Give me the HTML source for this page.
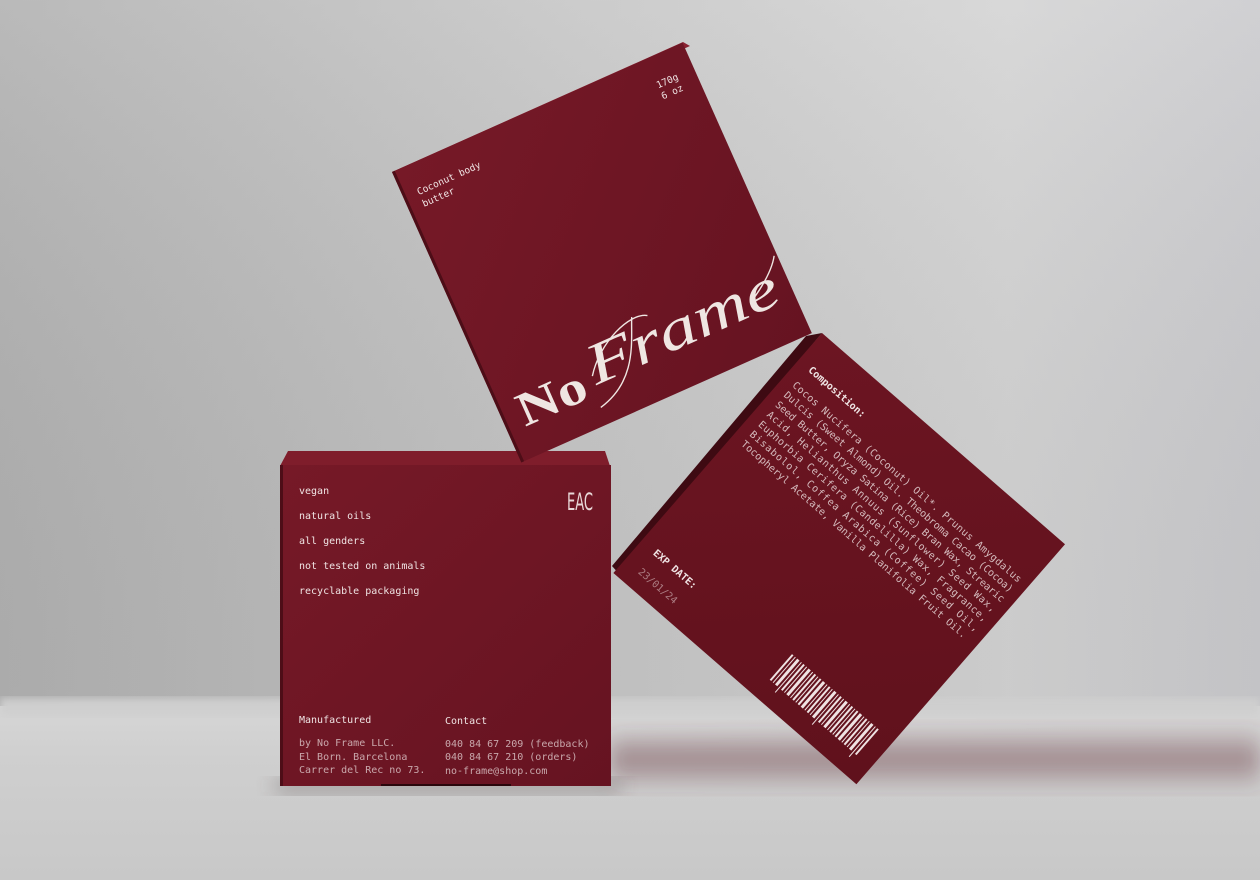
<!DOCTYPE html>
<html><head><meta charset="utf-8"><style>
html,body{margin:0;padding:0;width:1260px;height:880px;overflow:hidden;background:#c4c4c4}
svg{display:block}
.m{font-family:"DejaVu Sans Mono","Liberation Mono",monospace;fill:#efe3e3}
</style></head><body>
<svg width="1260" height="880" viewBox="0 0 1260 880" xmlns="http://www.w3.org/2000/svg">
<defs>
<linearGradient id="wall" x1="0" y1="0" x2="1" y2="0">
<stop offset="0" stop-color="#b2b2b2"/><stop offset="0.45" stop-color="#c6c6c6"/><stop offset="0.8" stop-color="#d4d4d4"/><stop offset="1" stop-color="#cbcbce"/></linearGradient>
<linearGradient id="wallv" x1="0" y1="0" x2="0" y2="1">
<stop offset="0" stop-color="#fff" stop-opacity="0.1"/><stop offset="1" stop-color="#000" stop-opacity="0.04"/></linearGradient>
<linearGradient id="floor" x1="0" y1="0" x2="0" y2="1">
<stop offset="0" stop-color="#d6d6d6"/><stop offset="0.3" stop-color="#cfcfcf"/><stop offset="1" stop-color="#c8c8c8"/></linearGradient>
<linearGradient id="sh" x1="0" y1="0" x2="0" y2="1">
<stop offset="0" stop-color="#6a3a42" stop-opacity="0"/><stop offset="0.55" stop-color="#6a3a42" stop-opacity="0.5"/><stop offset="1" stop-color="#6a3a42" stop-opacity="0"/></linearGradient>
<linearGradient id="red1" x1="0" y1="0" x2="1" y2="1">
<stop offset="0" stop-color="#761927"/><stop offset="1" stop-color="#661321"/></linearGradient>
<linearGradient id="red2" x1="0" y1="0" x2="1" y2="1">
<stop offset="0" stop-color="#6c1522"/><stop offset="1" stop-color="#60111c"/></linearGradient>
<filter id="blur"><feGaussianBlur stdDeviation="10"/></filter>
<filter id="blur2"><feGaussianBlur stdDeviation="4"/></filter>
</defs>
<rect width="1260" height="712" fill="url(#wall)"/>
<rect width="1260" height="712" fill="url(#wallv)"/>
<rect y="706" width="1260" height="174" fill="url(#floor)"/>
<rect y="698" width="1260" height="18" fill="#cfcfcf" filter="url(#blur2)"/>
<!-- shadows -->
<polygon points="610,735 1260,725 1260,790 860,790 610,785" fill="url(#sh)" filter="url(#blur)"/>
<rect x="275" y="778" width="345" height="16" fill="#3a2a2c" opacity="0.3" filter="url(#blur)"/>

<!-- bottom-left box -->
<polygon points="288,451 605,451 610,466 280,466" fill="#7f1d2b"/>
<rect x="280" y="465" width="331" height="321" fill="url(#red1)"/>
<rect x="280" y="465" width="3" height="321" fill="#4d0d17"/>
<rect x="381" y="784" width="130" height="2" fill="#2a070c"/>
<g class="m" font-size="10">
<text x="299" y="494">vegan</text>
<text x="299" y="519">natural oils</text>
<text x="299" y="544">all genders</text>
<text x="299" y="569">not tested on animals</text>
<text x="299" y="594">recyclable packaging</text>
<text x="299" y="723">Manufactured</text>
<text x="445" y="724">Contact</text>
<g opacity="0.7">
<text x="299" y="746">by No Frame LLC.</text>
<text x="299" y="760">El Born. Barcelona</text>
<text x="299" y="773">Carrer del Rec no 73.</text>
<text x="445" y="747">040 84 67 209 (feedback)</text>
<text x="445" y="760">040 84 67 210 (orders)</text>
<text x="445" y="774">no-frame@shop.com</text>
</g>
</g>
<text x="567" y="510" font-family="'DejaVu Sans Condensed','Liberation Sans Narrow',sans-serif" font-size="24" fill="#e8d8d8" textLength="26" lengthAdjust="spacingAndGlyphs">EAC</text>

<!-- right tilted box -->
<polygon points="612,566 806,336 822,333 620,575" fill="#3e0a12"/>
<g transform="translate(822,333) rotate(41)">
<rect x="0" y="0" width="322" height="318" fill="url(#red2)"/>
<g class="m" font-size="10">
<text x="14" y="38" font-weight="bold">Composition:</text>
<g opacity="0.8">
<text x="12" y="60" textLength="300">Cocos Nucifera (Coconut) Oil*. Prunus Amygdalus</text>
<text x="12" y="73" textLength="300">Dulcis (Sweet Almond) Oil. Theobroma Cacao (Cocoa)</text>
<text x="12" y="86" textLength="300">Seed Butter, Oryza Satina (Rice) Bran Wax, Strearic</text>
<text x="12" y="99" textLength="300">Acid, Helianthus Annuus (Sunflower) Seed Wax,</text>
<text x="12" y="112" textLength="300">Euphorbia Cerifera (Candelilla) Wax, Fragrance,</text>
<text x="12" y="125" textLength="300">Bisabolol, Coffea Arabica (Coffee) Seed Oil,</text>
<text x="12" y="138">Tocopheryl Acetate, Vanilla Planifolia Fruit Oil.</text>
</g>
<text x="17" y="278" font-weight="bold">EXP DATE:</text>
<text x="18" y="302" opacity="0.5">23/01/24</text>
</g>
<g fill="#efe3e3">
<rect x="188" y="262" width="2" height="34"/><rect x="192" y="262" width="1" height="34"/><rect x="195" y="262" width="3" height="34"/><rect x="200" y="262" width="1" height="40"/><rect x="203" y="262" width="2" height="34"/><rect x="207" y="262" width="1" height="34"/><rect x="210" y="262" width="3" height="34"/><rect x="215" y="262" width="1" height="34"/><rect x="218" y="262" width="2" height="34"/><rect x="222" y="262" width="1" height="34"/><rect x="225" y="262" width="2" height="34"/><rect x="229" y="262" width="3" height="34"/><rect x="234" y="262" width="1" height="34"/><rect x="237" y="262" width="2" height="34"/><rect x="241" y="262" width="1" height="34"/><rect x="244" y="262" width="3" height="34"/><rect x="249" y="262" width="1" height="40"/><rect x="252" y="262" width="2" height="34"/><rect x="256" y="262" width="1" height="34"/><rect x="259" y="262" width="3" height="34"/><rect x="264" y="262" width="1" height="34"/><rect x="267" y="262" width="2" height="34"/><rect x="271" y="262" width="1" height="34"/><rect x="274" y="262" width="2" height="34"/><rect x="278" y="262" width="3" height="34"/><rect x="283" y="262" width="1" height="34"/><rect x="286" y="262" width="2" height="34"/><rect x="290" y="262" width="1" height="34"/><rect x="293" y="262" width="3" height="34"/><rect x="298" y="262" width="1" height="40"/><rect x="301" y="262" width="2" height="34"/>
</g>
</g>

<!-- top tilted box -->
<polygon points="392,172 683,42 690,46 400,176" fill="#8a2231"/>
<g transform="translate(392,172) rotate(-24)">
<rect x="0" y="0" width="318" height="318" fill="url(#red1)"/>
<rect x="0" y="0" width="3" height="318" fill="#4d0d17"/>
<g class="m" font-size="9.5">
<text x="15" y="32">Coconut body</text>
<text x="15" y="45">butter</text>
<text x="300" y="32" text-anchor="end">170g</text>
<text x="300" y="44" text-anchor="end">6 oz</text>
</g>
<text x="18" y="287" font-family="'Liberation Serif',serif" font-weight="bold" font-size="48" fill="#efe6e2" textLength="72" lengthAdjust="spacingAndGlyphs">No</text>
<text x="100" y="278" font-family="'Liberation Serif',serif" font-style="italic" font-size="58" fill="#efe6e2" textLength="205" lengthAdjust="spacingAndGlyphs">Frame</text>
<path d="M100 268 C 120 240, 160 225, 175 235 M95 300 C 140 290, 150 250, 160 230 M280 262 C 300 250, 310 240, 315 232" stroke="#efe6e2" stroke-width="1.4" fill="none"/>
</g>
</svg>
</body></html>
